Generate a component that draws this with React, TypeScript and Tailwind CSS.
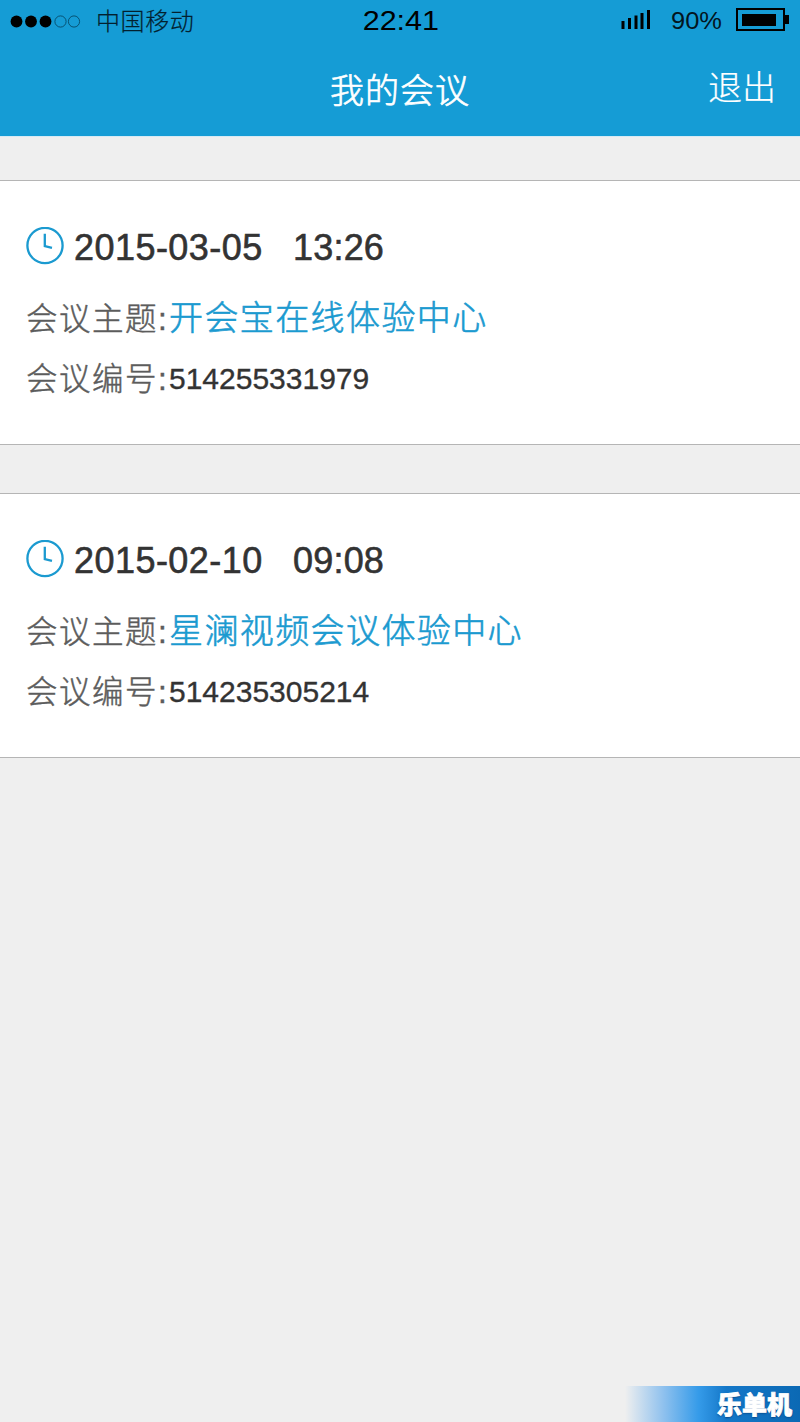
import React from 'react';

interface Meeting {
  date: string;
  time: string;
  topic: string;
  code: string;
}

const meetings: Meeting[] = [
  { date: '2015-03-05', time: '13:26', topic: '开会宝在线体验中心', code: '514255331979' },
  { date: '2015-02-10', time: '09:08', topic: '星澜视频会议体验中心', code: '514235305214' },
];

const StatusBar: React.FC = () => {
  return (
    <div className="grid grid-cols-3 h-[42px] text-black whitespace-nowrap">
      <div className="flex h-[42px] items-center pl-[10px]">
        <svg width="72" height="14" viewBox="0 0 72 14" className="mt-[2px]">
          <circle cx="6.5" cy="6.5" r="5.9" />
          <circle cx="21" cy="6.5" r="5.9" />
          <circle cx="35.5" cy="6.5" r="5.9" />
          <circle cx="50.5" cy="6.5" r="5.6" fill="none" stroke="#064a68" strokeWidth="0.9" />
          <circle cx="64" cy="6.5" r="5.6" fill="none" stroke="#064a68" strokeWidth="0.9" />
        </svg>
        <span className="ml-[14px] pt-[2px] text-[24px] font-light tracking-[0.6px] leading-[40px] text-[#03202e] [-webkit-text-stroke:0.2px_#03202e]">中国移动</span>
      </div>
      <div className="flex justify-center">
        <span className="pl-px scale-x-[1.13] text-[27px] leading-[42px]">22:41</span>
      </div>
      <div className="flex justify-end pr-[11px]">
        <svg width="29" height="20" viewBox="0 0 29 20" className="mt-[9px]">
          <rect x="0.5" y="12" width="3" height="8" />
          <rect x="7" y="9" width="3" height="11" />
          <rect x="13.5" y="6.5" width="3" height="13.5" />
          <rect x="19.5" y="4" width="3" height="16" />
          <rect x="26" y="1" width="3" height="19" />
        </svg>
        <span className="ml-[21px] w-[51px] origin-left scale-x-[1.06] text-[24px] leading-[41px] text-[#03151f]">90%</span>
        <svg width="53" height="23" viewBox="0 0 53 23" className="ml-[14px] mt-[8px]">
          <rect x="1" y="1" width="47" height="21" fill="none" stroke="#000" strokeWidth="2" />
          <rect x="6" y="6" width="34" height="12" />
          <rect x="49" y="7" width="4" height="9" />
        </svg>
      </div>
    </div>
  );
};

const ClockIcon: React.FC = () => {
  return (
    <svg width="38" height="38" viewBox="0 0 38 38" fill="none" stroke="#1b9ad0" strokeWidth="2.3">
      <circle cx="19" cy="18.5" r="17.6" />
      <path d="M18.8 6.7V19.1L26 20.9" />
    </svg>
  );
};

const MeetingCard: React.FC<{ meeting: Meeting }> = ({ meeting }) => {
  return (
    <div className="h-[265px] border-y border-[#b5b5b5] bg-white pl-[26px] pt-[44px] whitespace-nowrap">
      <div className="flex h-[42px] items-center text-[36px] tracking-[0.45px] text-[#333] [-webkit-text-stroke:0.6px_#333]">
        <ClockIcon />
        <span className="ml-[10px] w-[219px] pt-[3px]">{meeting.date}</span>
        <span className="pt-[3px] tracking-[0.2px]">{meeting.time}</span>
      </div>
      <div className="mt-[21px] flex h-[60px] items-center">
        <span className="w-[143px] pt-[3px] text-[31.5px] font-light tracking-[1.5px] text-[#5c5c5c] [-webkit-text-stroke:0.45px_#5c5c5c]">会议主题:</span>
        <span className="pt-px text-[34px] tracking-[1.4px] font-light text-[#1b9ad0] [-webkit-text-stroke:0.6px_#1b9ad0]">{meeting.topic}</span>
      </div>
      <div className="flex h-[60px] items-center">
        <span className="w-[143px] pt-[4px] text-[31.5px] font-light tracking-[1.5px] text-[#5c5c5c] [-webkit-text-stroke:0.45px_#5c5c5c]">会议编号:</span>
        <span className="text-[30px] text-[#333] [-webkit-text-stroke:0.35px_#333]">{meeting.code}</span>
      </div>
    </div>
  );
};

const App: React.FC = () => {
  return (
    <div className="flex h-[1422px] w-[800px] flex-col overflow-hidden bg-[#efefef] font-['Liberation_Sans','Noto_Sans_CJK_SC',sans-serif]">
      <header className="h-[137px] shrink-0 border-b border-[#d5eaf4] bg-[#159cd5]">
        <StatusBar />
        <div className="grid h-[94px] grid-cols-3 items-start text-white whitespace-nowrap">
          <span />
          <h1 className="pt-[2px] text-center text-[34px] font-light leading-[94px] tracking-[1px] [-webkit-text-stroke:0.7px_#fff]">我的会议</h1>
          <button className="pr-[24px] text-right text-[34px] font-light leading-[92px] [-webkit-text-stroke:0.2px_#fff]">退出</button>
        </div>
      </header>

      <main className="flex flex-1 flex-col gap-[48px] pt-[43px]">
        {meetings.map((meeting) => (
          <MeetingCard key={meeting.code} meeting={meeting} />
        ))}
      </main>

      <footer className="flex justify-end">
        <div className="h-[36px] w-[175px] bg-[linear-gradient(90deg,#efefef_0%,#8fc1ee_22%,#359be9_42%,#1477c8_58%,#0b69b4_100%)] pr-[8px] text-right text-[25px] font-black leading-[38px] text-white [-webkit-text-stroke:0.8px_#fff] [text-shadow:0_1px_2px_#063a75]">
          乐单机
        </div>
      </footer>
    </div>
  );
};

export default App;
